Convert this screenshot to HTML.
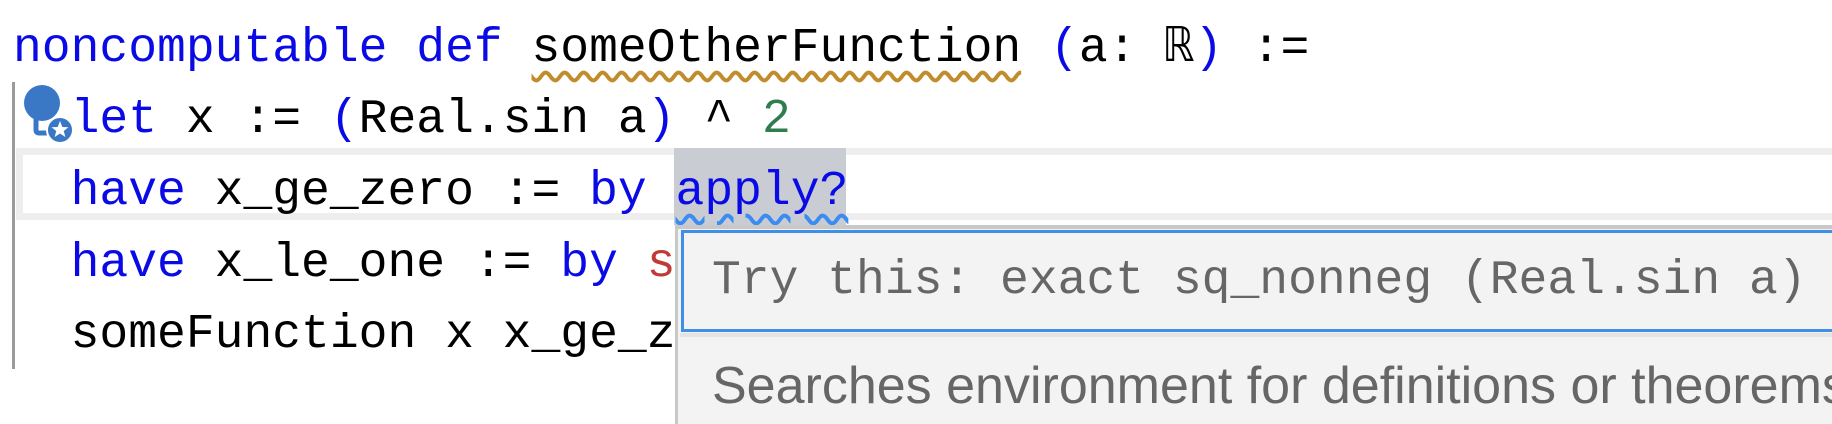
<!DOCTYPE html>
<html><head><meta charset="utf-8"><style>
html,body{margin:0;padding:0;width:1832px;height:424px;overflow:hidden;background:#fff;position:relative}
.m{font-family:"Liberation Mono","DejaVu Sans Mono",monospace;font-size:48px;white-space:pre;position:absolute;line-height:72px;color:#000}
.k{color:#0a0ae6}
.g{color:#2e7d4f}
.r{color:#c03a36}
.w{text-decoration:underline wavy #c18c2c;text-decoration-thickness:4px;text-underline-offset:10px}
.wb{text-decoration:underline wavy #3b8cf0;text-decoration-thickness:4px;text-underline-offset:10px}
</style></head><body>
<div style="position:absolute;left:12px;top:82px;width:3px;height:287px;background:#9a9a9a"></div>
<div style="position:absolute;left:16px;top:148px;width:1830px;border:7px solid #eeeeee;border-right:none;box-sizing:content-box;background:#fff;height:58px"></div>
<div style="position:absolute;left:674px;top:148px;width:172px;height:77px;background:#c9cdd3"></div>

<div class="m" style="left:13px;top:13px"><span class="k">noncomputable def</span> <span class="w">someOtherFunction</span> <span class="k">(</span>a: ℝ<span class="k">)</span> :=</div>
<div class="m" style="left:13px;top:84px">  <span class="k">let</span> x := <span class="k">(</span>Real.sin a<span class="k">)</span> ^ <span class="g">2</span></div>
<div class="m" style="left:13px;top:156px">  <span class="k">have</span> x_ge_zero := <span class="k">by</span> <span class="k wb">apply?</span></div>
<div class="m" style="left:13px;top:228px">  <span class="k">have</span> x_le_one := <span class="k">by</span> <span class="r">s</span></div>
<div class="m" style="left:13px;top:299px">  someFunction x x_ge_z</div>

<svg style="position:absolute;left:0;top:70px" width="80" height="80" viewBox="0 70 80 80">
<circle cx="42" cy="103" r="18" fill="#3a78c6"/>
<path d="M36 115 L36 130 Q36 133 39 133 L48 133" stroke="#3a78c6" stroke-width="5" fill="none"/>
<circle cx="60" cy="130" r="13" fill="#3a78c6" stroke="#fff" stroke-width="2"/>
<polygon points="60,121 62.3,127 68.5,127.3 63.7,131 65.4,137 60,133.5 54.6,137 56.3,131 51.5,127.3 57.7,127" fill="#fff"/>
</svg>

<div style="position:absolute;left:675px;top:225px;width:1154px;height:195px;background:#f3f3f3;border-left:3px solid #c8c8c8;border-top:4px solid #c8c8c8;overflow:hidden"></div>
<div style="position:absolute;left:681px;top:230px;width:1148px;height:96px;border:3px solid #3f8ee8;border-right:none;background:#f3f3f3"></div>
<div style="position:absolute;left:680px;top:333px;width:1152px;height:4px;background:#e4e4e4"></div>
<div class="m" style="left:712px;top:245px;color:#666">Try this: exact sq_nonneg (Real.sin a)</div>
<div style="position:absolute;left:712px;top:356px;width:1120px;height:64px;overflow:hidden;font-family:'Liberation Sans',sans-serif;font-size:52px;line-height:60px;color:#666;white-space:pre">Searches environment for definitions or theorems</div>
</body></html>
